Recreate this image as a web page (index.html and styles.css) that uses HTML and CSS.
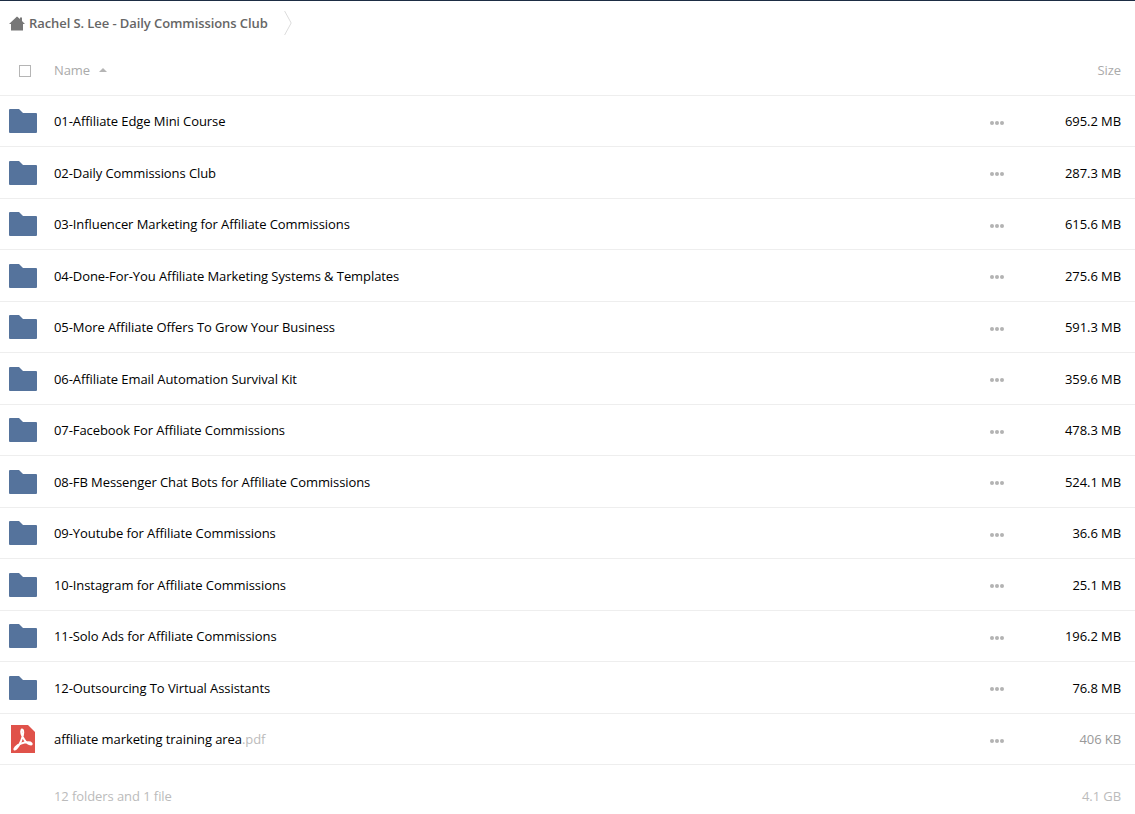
FILE: index.html
```html
<!DOCTYPE html>
<html lang="en">
<head>
<meta charset="utf-8">
<title>Rachel S. Lee - Daily Commissions Club</title>
<link rel="stylesheet" href="styles.css">
</head>
<body>
<nav class="crumbs">
  <svg class="home" width="16" height="15" viewBox="0 0 16 15"><path fill="#777" d="M8 0.5 L11 3 V1.5 H13 V5 L16 8 H14 V14.5 H2 V8 H0 Z"/></svg>
  <span class="crumb-text">Rachel S. Lee - Daily Commissions Club</span>
  <svg class="chev" width="8" height="24" viewBox="0 0 8 24"><path fill="none" stroke="#dcdcdc" d="M0.6 0 L7.2 12 L0.6 24"/></svg>
</nav>
<div class="head">
  <span class="check-cell"><span class="check"></span></span>
  <span class="head-name">Name</span>
  <span class="sort"></span>
  <span class="head-size">Size</span>
</div>
<main class="list">
  <div class="row"><svg class="folder" viewBox="0 0 28 24"><path d="M0 1 a1 1 0 0 1 1-1 H10 L14 4 H27 a1 1 0 0 1 1 1 V23 a1 1 0 0 1-1 1 H1 a1 1 0 0 1-1-1 Z"/></svg><span class="name">01-Affiliate Edge Mini Course</span><span class="dots"><i></i><i></i><i></i></span><span class="size">695.2 MB</span></div>
  <div class="row"><svg class="folder" viewBox="0 0 28 24"><path d="M0 1 a1 1 0 0 1 1-1 H10 L14 4 H27 a1 1 0 0 1 1 1 V23 a1 1 0 0 1-1 1 H1 a1 1 0 0 1-1-1 Z"/></svg><span class="name">02-Daily Commissions Club</span><span class="dots"><i></i><i></i><i></i></span><span class="size">287.3 MB</span></div>
  <div class="row"><svg class="folder" viewBox="0 0 28 24"><path d="M0 1 a1 1 0 0 1 1-1 H10 L14 4 H27 a1 1 0 0 1 1 1 V23 a1 1 0 0 1-1 1 H1 a1 1 0 0 1-1-1 Z"/></svg><span class="name">03-Influencer Marketing for Affiliate Commissions</span><span class="dots"><i></i><i></i><i></i></span><span class="size">615.6 MB</span></div>
  <div class="row"><svg class="folder" viewBox="0 0 28 24"><path d="M0 1 a1 1 0 0 1 1-1 H10 L14 4 H27 a1 1 0 0 1 1 1 V23 a1 1 0 0 1-1 1 H1 a1 1 0 0 1-1-1 Z"/></svg><span class="name">04-Done-For-You Affiliate Marketing Systems &amp; Templates</span><span class="dots"><i></i><i></i><i></i></span><span class="size">275.6 MB</span></div>
  <div class="row"><svg class="folder" viewBox="0 0 28 24"><path d="M0 1 a1 1 0 0 1 1-1 H10 L14 4 H27 a1 1 0 0 1 1 1 V23 a1 1 0 0 1-1 1 H1 a1 1 0 0 1-1-1 Z"/></svg><span class="name">05-More Affiliate Offers To Grow Your Business</span><span class="dots"><i></i><i></i><i></i></span><span class="size">591.3 MB</span></div>
  <div class="row"><svg class="folder" viewBox="0 0 28 24"><path d="M0 1 a1 1 0 0 1 1-1 H10 L14 4 H27 a1 1 0 0 1 1 1 V23 a1 1 0 0 1-1 1 H1 a1 1 0 0 1-1-1 Z"/></svg><span class="name">06-Affiliate Email Automation Survival Kit</span><span class="dots"><i></i><i></i><i></i></span><span class="size">359.6 MB</span></div>
  <div class="row"><svg class="folder" viewBox="0 0 28 24"><path d="M0 1 a1 1 0 0 1 1-1 H10 L14 4 H27 a1 1 0 0 1 1 1 V23 a1 1 0 0 1-1 1 H1 a1 1 0 0 1-1-1 Z"/></svg><span class="name">07-Facebook For Affiliate Commissions</span><span class="dots"><i></i><i></i><i></i></span><span class="size">478.3 MB</span></div>
  <div class="row"><svg class="folder" viewBox="0 0 28 24"><path d="M0 1 a1 1 0 0 1 1-1 H10 L14 4 H27 a1 1 0 0 1 1 1 V23 a1 1 0 0 1-1 1 H1 a1 1 0 0 1-1-1 Z"/></svg><span class="name">08-FB Messenger Chat Bots for Affiliate Commissions</span><span class="dots"><i></i><i></i><i></i></span><span class="size">524.1 MB</span></div>
  <div class="row"><svg class="folder" viewBox="0 0 28 24"><path d="M0 1 a1 1 0 0 1 1-1 H10 L14 4 H27 a1 1 0 0 1 1 1 V23 a1 1 0 0 1-1 1 H1 a1 1 0 0 1-1-1 Z"/></svg><span class="name">09-Youtube for Affiliate Commissions</span><span class="dots"><i></i><i></i><i></i></span><span class="size">36.6 MB</span></div>
  <div class="row"><svg class="folder" viewBox="0 0 28 24"><path d="M0 1 a1 1 0 0 1 1-1 H10 L14 4 H27 a1 1 0 0 1 1 1 V23 a1 1 0 0 1-1 1 H1 a1 1 0 0 1-1-1 Z"/></svg><span class="name">10-Instagram for Affiliate Commissions</span><span class="dots"><i></i><i></i><i></i></span><span class="size">25.1 MB</span></div>
  <div class="row"><svg class="folder" viewBox="0 0 28 24"><path d="M0 1 a1 1 0 0 1 1-1 H10 L14 4 H27 a1 1 0 0 1 1 1 V23 a1 1 0 0 1-1 1 H1 a1 1 0 0 1-1-1 Z"/></svg><span class="name">11-Solo Ads for Affiliate Commissions</span><span class="dots"><i></i><i></i><i></i></span><span class="size">196.2 MB</span></div>
  <div class="row"><svg class="folder" viewBox="0 0 28 24"><path d="M0 1 a1 1 0 0 1 1-1 H10 L14 4 H27 a1 1 0 0 1 1 1 V23 a1 1 0 0 1-1 1 H1 a1 1 0 0 1-1-1 Z"/></svg><span class="name">12-Outsourcing To Virtual Assistants</span><span class="dots"><i></i><i></i><i></i></span><span class="size">76.8 MB</span></div>
  <div class="row"><svg class="pdf" viewBox="0 0 24 28"><path fill="#e0524a" d="M0 0 H17 L24 7 V28 H0 Z"/><path fill="none" stroke="#fff" stroke-width="1.9" d="M10.5 5 C9.5 7 11 11 13.2 14.5 C15.3 18 17.5 19.5 20 19.5 C21.6 19.5 20.5 17.3 17.5 17.3 C13.5 17.3 7.5 19 4.2 22.5 C2.2 24.8 4 25.5 6 23 C8.5 20 12.3 12 12.3 7.5 C12.3 4.5 11 4 10.5 5 Z"/></svg><span class="name">affiliate marketing training area<span class="ext">.pdf</span></span><span class="dots"><i></i><i></i><i></i></span><span class="size muted">406 KB</span></div>
</main>
<footer class="summary">
  <span class="sum-name">12 folders and 1 file</span>
  <span class="sum-size">4.1 GB</span>
</footer>
</body>
</html>
```
FILE: styles.css
```css
html, body { margin: 0; padding: 0; background: #fff; }
body {
  border-top: 1px solid #1d2d44;
  font-family: "Open Sans", sans-serif;
  font-size: 13px;
  letter-spacing: -0.08px;
  color: #000;
  height: 813px;
  overflow: hidden;
}
.crumbs {
  display: flex;
  align-items: center;
  height: 44px;
  padding-left: 9px;
}
.home { display: block; flex: none; margin-right: 4px; }
.crumb-text { font-weight: 600; color: #666; }
.chev { margin-left: 16px; flex: none; }
.head {
  display: flex;
  align-items: center;
  height: 49.7px;
  border-bottom: 1px solid #eee;
  color: #aaa;
}
.check-cell { width: 54px; flex: none; padding-left: 19px; padding-top: 2px; box-sizing: border-box; display: flex; }
.check { width: 10px; height: 10px; border: 1px solid #b5b5b5; display: block; }
.head-name { color: #aaa; }
.sort {
  width: 0; height: 0; margin-left: 9px; margin-top: 1px;
  border-left: 4px solid transparent;
  border-right: 4px solid transparent;
  border-bottom: 4px solid #b5b5b5;
}
.head-size { margin-left: auto; padding-right: 14px; color: #aaa; }
.list { display: block; }
.row {
  display: flex;
  align-items: center;
  box-sizing: border-box;
  height: 51.5px;
  padding-top: 0.6px;
  border-bottom: 1px solid #eee;
}
.folder { width: 28px; height: 24px; fill: #55739c; margin-left: 9px; margin-right: 17px; flex: none; }
.pdf { width: 24px; height: 28px; margin-left: 11px; margin-right: 19px; flex: none; }
.name { flex: 1; white-space: nowrap; }
.ext { color: #bbb; }
.dots { display: flex; gap: 1px; width: 15px; margin-top: 3px; flex: none; }
.dots i { display: block; width: 4px; height: 4px; border-radius: 50%; background: #b3b3b3; }
.size { flex: none; text-align: right; padding-right: 14px; width: 116px; }
.size.muted { color: #999; }
.summary {
  display: flex;
  justify-content: space-between;
  align-items: center;
  height: 61px;
  padding: 0 14px 0 54px;
  color: #bbb;
}
```
